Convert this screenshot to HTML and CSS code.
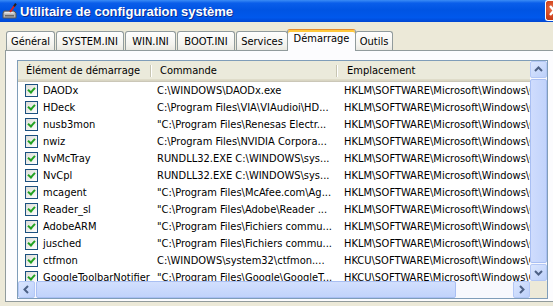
FILE: index.html
```html
<!DOCTYPE html>
<html lang="fr">
<head>
    <meta charset="UTF-8">
    <title>Utilitaire de configuration système</title>
    <link rel="stylesheet" href="styles.css">
</head>
<body>
    <div class="titlebar">
        <svg class="app-icon" viewBox="0 0 16 16">
            <path d="M2 8 h10 l2 2 v5 h-13 v-5 z" fill="#b5b5b5" stroke="#555" stroke-width="1"/>
            <path d="M3 9 h8 l1.5 1.5 h-10.5 z" fill="#e8e8e8"/>
            <rect x="3" y="12" width="9" height="1.5" fill="#6a6a6a"/>
            <path d="M8 9 L13 2" stroke="#d42020" stroke-width="2"/>
            <path d="M12 3.4 L14 0.6" stroke="#222" stroke-width="2"/>
        </svg>
        <span class="title">Utilitaire de configuration système</span>
        <span class="close-btn">
            <svg viewBox="0 0 8 20"><path d="M4 5 L12 14 M4 14 L12 5" stroke="#fff" stroke-width="2.4"/></svg>
        </span>
    </div>

    <div class="tabs">
        <div class="tab">Général</div>
        <div class="tab">SYSTEM.INI</div>
        <div class="tab">WIN.INI</div>
        <div class="tab">BOOT.INI</div>
        <div class="tab">Services</div>
        <div class="tab active">Démarrage</div>
        <div class="tab">Outils</div>
    </div>

    <div class="panel">
        <div class="listview">
            <div class="lv-body">
                <div class="lv-header">
                    <div class="col c1">Élément de démarrage</div>
                    <div class="col c2">Commande</div>
                    <div class="col c3">Emplacement</div>
                </div>
                <div class="lv-row">
                    <div class="cell c1"><span class="check"></span>DAODx</div>
                    <div class="cell c2">C:\WINDOWS\DAODx.exe</div>
                    <div class="cell c3">HKLM\SOFTWARE\Microsoft\Windows\CurrentVersion\Run</div>
                </div>
                <div class="lv-row">
                    <div class="cell c1"><span class="check"></span>HDeck</div>
                    <div class="cell c2">C:\Program Files\VIA\VIAudioi\HD...</div>
                    <div class="cell c3">HKLM\SOFTWARE\Microsoft\Windows\CurrentVersion\Run</div>
                </div>
                <div class="lv-row">
                    <div class="cell c1"><span class="check"></span>nusb3mon</div>
                    <div class="cell c2">"C:\Program Files\Renesas Electr...</div>
                    <div class="cell c3">HKLM\SOFTWARE\Microsoft\Windows\CurrentVersion\Run</div>
                </div>
                <div class="lv-row">
                    <div class="cell c1"><span class="check"></span>nwiz</div>
                    <div class="cell c2">C:\Program Files\NVIDIA Corpora...</div>
                    <div class="cell c3">HKLM\SOFTWARE\Microsoft\Windows\CurrentVersion\Run</div>
                </div>
                <div class="lv-row">
                    <div class="cell c1"><span class="check"></span>NvMcTray</div>
                    <div class="cell c2">RUNDLL32.EXE C:\WINDOWS\sys...</div>
                    <div class="cell c3">HKLM\SOFTWARE\Microsoft\Windows\CurrentVersion\Run</div>
                </div>
                <div class="lv-row">
                    <div class="cell c1"><span class="check"></span>NvCpl</div>
                    <div class="cell c2">RUNDLL32.EXE C:\WINDOWS\sys...</div>
                    <div class="cell c3">HKLM\SOFTWARE\Microsoft\Windows\CurrentVersion\Run</div>
                </div>
                <div class="lv-row">
                    <div class="cell c1"><span class="check"></span>mcagent</div>
                    <div class="cell c2">"C:\Program Files\McAfee.com\Ag...</div>
                    <div class="cell c3">HKLM\SOFTWARE\Microsoft\Windows\CurrentVersion\Run</div>
                </div>
                <div class="lv-row">
                    <div class="cell c1"><span class="check"></span>Reader_sl</div>
                    <div class="cell c2">"C:\Program Files\Adobe\Reader ...</div>
                    <div class="cell c3">HKLM\SOFTWARE\Microsoft\Windows\CurrentVersion\Run</div>
                </div>
                <div class="lv-row">
                    <div class="cell c1"><span class="check"></span>AdobeARM</div>
                    <div class="cell c2">"C:\Program Files\Fichiers commu...</div>
                    <div class="cell c3">HKLM\SOFTWARE\Microsoft\Windows\CurrentVersion\Run</div>
                </div>
                <div class="lv-row">
                    <div class="cell c1"><span class="check"></span>jusched</div>
                    <div class="cell c2">"C:\Program Files\Fichiers commu...</div>
                    <div class="cell c3">HKLM\SOFTWARE\Microsoft\Windows\CurrentVersion\Run</div>
                </div>
                <div class="lv-row">
                    <div class="cell c1"><span class="check"></span>ctfmon</div>
                    <div class="cell c2">C:\WINDOWS\system32\ctfmon....</div>
                    <div class="cell c3">HKCU\SOFTWARE\Microsoft\Windows\CurrentVersion\Run</div>
                </div>
                <div class="lv-row">
                    <div class="cell c1"><span class="check"></span>GoogleToolbarNotifier</div>
                    <div class="cell c2">"C:\Program Files\Google\GoogleT...</div>
                    <div class="cell c3">HKCU\SOFTWARE\Microsoft\Windows\CurrentVersion\Run</div>
                </div>
            </div>

            <div class="vscroll">
                <div class="sb-btn"><svg viewBox="0 0 15 15"><path d="M4 9 L7.5 5.5 L11 9" stroke="#4d6185" stroke-width="2" fill="none"/></svg></div>
                <div class="sb-track"><div class="sb-thumb"></div></div>
                <div class="sb-btn"><svg viewBox="0 0 15 15"><path d="M4 6 L7.5 9.5 L11 6" stroke="#4d6185" stroke-width="2" fill="none"/></svg></div>
            </div>
            <div class="hscroll">
                <div class="sb-btn"><svg viewBox="0 0 15 15"><path d="M9 4 L5.5 7.5 L9 11" stroke="#4d6185" stroke-width="2" fill="none"/></svg></div>
                <div class="sb-track"><div class="sb-thumb"></div></div>
                <div class="sb-btn"><svg viewBox="0 0 15 15"><path d="M6 4 L9.5 7.5 L6 11" stroke="#4d6185" stroke-width="2" fill="none"/></svg></div>
            </div>
            <div class="corner"></div>
        </div>
    </div>
</body>
</html>
```

FILE: styles.css
```css
body {
    margin: 0;
    width: 553px;
    height: 306px;
    overflow: hidden;
    background-color: #ece9d8;
    font-family: "DejaVu Sans Condensed", "DejaVu Sans", sans-serif;
    font-stretch: condensed;
    font-size: 11px;
    color: #000;
}

/* title bar */
.titlebar {
    height: 22px;
    display: flex;
    align-items: center;
    background: linear-gradient(to bottom, #3b8cf5 0%, #0a5eea 14%, #0054e3 45%, #0058ec 80%, #0046d2 100%);
    color: #fff;
}
.app-icon {
    width: 16px;
    height: 16px;
    margin: 0 2px 0 2px;
}
.title {
    font-family: "Liberation Sans", Arial, sans-serif;
    font-stretch: normal;
    font-weight: bold;
    font-size: 13px;
    text-shadow: 1px 1px #0c2a8e;
}
.close-btn {
    margin-left: auto;
    align-self: flex-start;
    width: 7px;
    height: 19px;
    overflow: hidden;
    border: 1px solid #fff;
    border-right: none;
    border-radius: 3px 0 0 3px;
    background: radial-gradient(circle at 90% 40%, #e8734a, #d2451f 60%, #b83a1a);
}
.close-btn svg {
    display: block;
    width: 8px;
    height: 20px;
}

/* tabs */
.tabs {
    display: flex;
    align-items: flex-end;
    height: 22px;
    margin-top: 7px;
    margin-bottom: -1px;
    padding-left: 6px;
    position: relative;
    z-index: 1;
}
.tab {
    box-sizing: border-box;
    height: 19px;
    margin: 0 1px 1px 0;
    padding-top: 2px;
    line-height: 16px;
    text-align: center;
    border: 1px solid #919b9c;
    border-bottom: none;
    border-radius: 3px 3px 0 0;
    background: linear-gradient(to bottom, #fefefe, #f4f3ee 70%, #e9e8e1);
}
.tab:nth-child(1) { width: 49px; }
.tab:nth-child(2) { width: 68px; }
.tab:nth-child(3) { width: 51px; }
.tab:nth-child(4) { width: 58px; }
.tab:nth-child(5) { width: 52px; }
.tab:nth-child(6) { width: 65px; }
.tab:nth-child(7) { width: 38px; }
.tab.active {
    width: 69px;
    height: 22px;
    margin: 0 -1px 0 -2px;
    padding-top: 1px;
    background: #fcfcfe;
    border-top: 1px solid #e68b2c;
    box-shadow: inset 0 2px 0 #ffc83c;
    position: relative;
}

/* panel */
.panel {
    width: 560px;
    height: 252px;
    box-sizing: border-box;
    margin-left: 5px;
    padding: 9px 0 0 11px;
    border: 1px solid #919b9c;
    border-right: none;
    background: #fcfcfe;
}

/* list view */
.listview {
    width: 531px;
    height: 239px;
    box-sizing: border-box;
    border: 1px solid #7f9db9;
    background: #fff;
    display: grid;
    grid-template-columns: 512px 17px;
    grid-template-rows: 220px 17px;
}
.lv-body {
    overflow: hidden;
    white-space: nowrap;
}
.lv-header {
    display: flex;
    height: 21px;
    background: linear-gradient(to bottom, #ebeadb 0, #ebeadb 18px, #e2dfcc 18px, #d6d2c0 20px, #cbc7b8 20px);
}
.col {
    flex: none;
    position: relative;
    box-sizing: border-box;
    padding: 1px 0 0 8px;
    line-height: 18px;
}
.col::after {
    content: "";
    position: absolute;
    right: 0;
    top: 4px;
    bottom: 5px;
    width: 2px;
    background: linear-gradient(to right, #c7c5b2 1px, #fff 1px);
}
.c1 { width: 134px; }
.c2 { width: 186px; }
.c3 { width: 320px; }
.col.c3 { padding-left: 9px; }

.lv-row {
    display: flex;
    height: 17px;
    line-height: 17px;
}
.cell {
    flex: none;
    box-sizing: border-box;
    overflow: hidden;
    padding-left: 5px;
}
.cell.c1 {
    display: flex;
    align-items: center;
    padding-left: 7px;
}
.cell.c3 { padding-left: 6px; }

.check {
    flex: none;
    position: relative;
    box-sizing: border-box;
    width: 13px;
    height: 13px;
    margin-right: 5px;
    border: 1px solid #1c5180;
    background: linear-gradient(135deg, #dcdcd7, #fff);
}
.check::after {
    content: "";
    position: absolute;
    left: 2px;
    top: 1px;
    width: 5px;
    height: 3px;
    border-left: 2px solid #21a121;
    border-bottom: 2px solid #21a121;
    transform: rotate(-48deg);
    transform-origin: center;
    top: 2px;
}

/* scrollbars */
.vscroll, .hscroll {
    display: flex;
    background: #f7f8fd;
}
.vscroll {
    flex-direction: column;
}
.sb-btn {
    flex: none;
    width: 17px;
    height: 17px;
    box-sizing: border-box;
    border: 1px solid #b4c8f6;
    border-radius: 2px;
    background: linear-gradient(135deg, #dbe6fe, #bcd0fa);
}
.sb-btn svg {
    display: block;
    width: 15px;
    height: 15px;
}
.sb-track {
    flex: 1;
    display: flex;
}
.vscroll .sb-track {
    flex-direction: column;
    padding: 1px 0;
}
.sb-thumb {
    box-sizing: border-box;
    border: 1px solid #a9bff3;
    border-radius: 2px;
    background: linear-gradient(to right, #cfdcfd, #c1d3fb);
}
.vscroll .sb-thumb {
    flex: 1;
}
.hscroll .sb-thumb {
    width: 420px;
    margin-left: 1px;
    background: linear-gradient(to bottom, #d2dffd, #c1d3fb);
}
.corner {
    background: #ece9d8;
}
```
